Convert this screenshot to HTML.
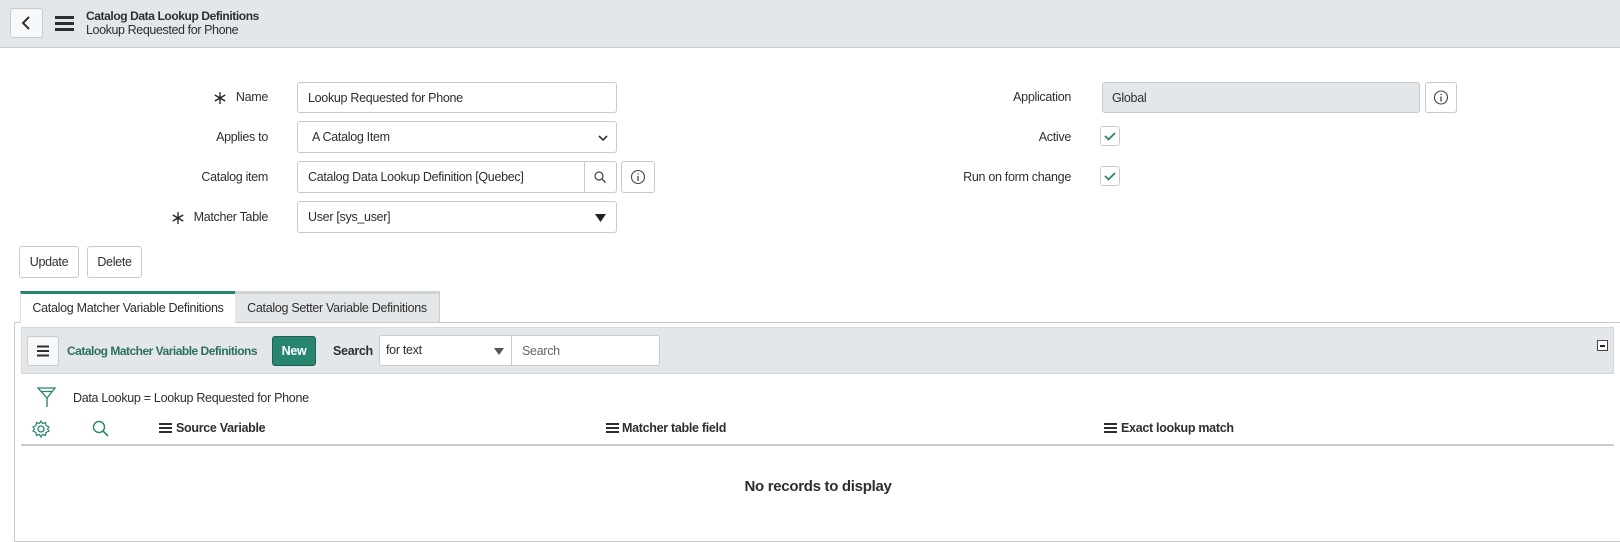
<!DOCTYPE html>
<html><head><meta charset="utf-8"><style>
*{box-sizing:border-box;margin:0;padding:0}
body{width:1620px;height:542px;background:#fff;font-family:"Liberation Sans",sans-serif;font-size:12px;color:#2e2e2e;position:relative;overflow:hidden;letter-spacing:-0.3px}
.a{position:absolute}
.top{left:0;top:0;width:1620px;height:48px;background:#e4e7ea;border-bottom:1px solid #c9cdd1}
.btn{position:absolute;border:1px solid #c8cbce;border-radius:3px;background:#fff}
.inp{position:absolute;border:1px solid #c8cbce;border-radius:3px;background:#fff;padding-left:10px;display:flex;align-items:center;font-size:12.5px;color:#2e2e2e}
.lbl{position:absolute;text-align:right;font-size:12.5px;color:#2e2e2e}
.chk{position:absolute;width:20px;height:20px;border:1px solid #c8cbce;border-radius:3px;background:#fff}
.ham i{display:block;height:2px;background:#2e2e2e;margin-bottom:4px}
</style></head><body>
<div class="a top"></div>
<div class="btn" style="left:10px;top:8px;width:33px;height:30px;background:#f7f8f9">
<svg width="33" height="30" style="position:absolute;left:-1px;top:-1px"><path d="M19 9 L13 15 L19 21" stroke="#2e2e2e" stroke-width="2" fill="none"/></svg></div>
<div class="a ham" style="left:55px;top:16px;width:19px"><i style="height:3px;margin-bottom:3px"></i><i style="height:3px;margin-bottom:3px"></i><i style="height:3px"></i></div>
<div class="a" style="left:86px;top:9px;line-height:14px;font-size:12.5px;color:#2e2e2e;letter-spacing:-0.4px"><span style="font-weight:bold;font-size:12px">Catalog Data Lookup Definitions</span><br>Lookup Requested for Phone</div>

<svg class="a" style="left:213px;top:91px" width="14" height="14"><path d="M7 1 V13 M1.8 4 L12.2 10 M1.8 10 L12.2 4" stroke="#222" stroke-width="1.3"/></svg>
<div class="lbl" style="right:1352px;top:90px">Name</div>
<div class="lbl" style="right:1352px;top:130px">Applies to</div>
<div class="lbl" style="right:1352px;top:170px">Catalog item</div>
<div class="lbl" style="right:1352px;top:210px">Matcher Table</div>
<svg class="a" style="left:171px;top:211px" width="14" height="14"><path d="M7 1 V13 M1.8 4 L12.2 10 M1.8 10 L12.2 4" stroke="#222" stroke-width="1.3"/></svg>

<div class="inp" style="left:297px;top:82px;width:320px;height:31px">Lookup Requested for Phone</div>
<div class="inp" style="left:297px;top:121px;width:320px;height:32px;padding-left:14px">A Catalog Item
<svg class="a" style="right:8px;top:12px" width="10" height="8"><path d="M1 2 L5 6 L9 2" stroke="#333" stroke-width="1.6" fill="none"/></svg></div>
<div class="inp" style="left:297px;top:161px;width:320px;height:32px">Catalog Data Lookup Definition [Quebec]
<div class="a" style="left:286px;top:0;width:1px;height:30px;background:#c8cbce"></div>
<svg class="a" style="left:295px;top:8px" width="14" height="14"><circle cx="6" cy="6" r="4" stroke="#444" stroke-width="1.2" fill="none"/><path d="M9 9 L12.5 12.5" stroke="#444" stroke-width="1.3"/></svg></div>
<div class="btn" style="left:621px;top:161px;width:34px;height:32px"><svg width="32" height="30"><circle cx="16" cy="15" r="6.5" stroke="#444" stroke-width="1.1" fill="none"/><path d="M16 14 V19 M16 11.5 V12.5" stroke="#444" stroke-width="1.3"/></svg></div>
<div class="inp" style="left:297px;top:201px;width:320px;height:32px">User [sys_user]
<svg class="a" style="right:10px;top:11px" width="11" height="10"><path d="M0 1 H11 L5.5 9 Z" fill="#222"/></svg></div>

<div class="lbl" style="right:549px;top:90px">Application</div>
<div class="lbl" style="right:549px;top:130px">Active</div>
<div class="lbl" style="right:549px;top:170px">Run on form change</div>
<div class="inp" style="left:1102px;top:82px;width:318px;height:31px;background:#e4e7ea;padding-left:9px">Global</div>
<div class="btn" style="left:1425px;top:82px;width:32px;height:31px"><svg width="30" height="29"><circle cx="15" cy="14.5" r="6.5" stroke="#444" stroke-width="1.1" fill="none"/><path d="M15 13.5 V18.5 M15 11 V12" stroke="#444" stroke-width="1.3"/></svg></div>
<div class="chk" style="left:1100px;top:126px"><svg width="18" height="18"><path d="M4 9 L7.5 12.5 L14 6" stroke="#278570" stroke-width="1.8" fill="none"/></svg></div>
<div class="chk" style="left:1100px;top:166px"><svg width="18" height="18"><path d="M4 9 L7.5 12.5 L14 6" stroke="#278570" stroke-width="1.8" fill="none"/></svg></div>

<div class="btn" style="left:19px;top:246px;width:60px;height:32px;text-align:center;line-height:30px;font-size:12.5px">Update</div>
<div class="btn" style="left:87px;top:246px;width:55px;height:32px;text-align:center;line-height:30px;font-size:12.5px">Delete</div>

<div class="a" style="left:14px;top:322px;width:1606px;height:220px;border:1px solid #c8cbce;border-right:none"></div>
<div class="a" style="left:20px;top:291px;width:215px;height:32px;background:#fff;border-top:3px solid #278570;border-left:1px solid #e0e0e0;text-align:center;line-height:29px;font-size:12.5px">Catalog Matcher Variable Definitions</div>
<div class="a" style="left:235px;top:291px;width:205px;height:31px;background:#e4e7ea;border-top:3px solid #d0d3d6;border-right:1px solid #c8cbce;text-align:center;line-height:28px;font-size:12.5px">Catalog Setter Variable Definitions</div>

<div class="a" style="left:21px;top:327px;width:1593px;height:47px;background:#e4e7ea;border:1px solid #d6d9dc"></div>
<div class="btn" style="left:27px;top:336px;width:32px;height:30px;background:#f7f8f9"><svg width="30" height="28"><path d="M9 9.5 H21 M9 14 H21 M9 18.5 H21" stroke="#2e2e2e" stroke-width="2"/></svg></div>
<div class="a" style="left:67px;top:344px;color:#2b6f62;font-size:12px;font-weight:bold;letter-spacing:-0.5px">Catalog Matcher Variable Definitions</div>
<div class="a" style="left:272px;top:336px;width:44px;height:30px;background:#278570;border:1px solid #1d5f51;border-radius:3px;color:#fff;font-weight:bold;text-align:center;line-height:28px;font-size:12.5px">New</div>
<div class="a" style="left:333px;top:344px;font-size:12.5px;font-weight:bold">Search</div>
<div class="inp" style="left:379px;top:335px;width:133px;height:31px;padding-left:6px;border-radius:3px 0 0 3px;align-items:flex-start;padding-top:7px">for text
<svg class="a" style="right:7px;top:12px" width="10" height="8"><path d="M0 0 H10 L5 7 Z" fill="#555"/></svg></div>
<div class="inp" style="left:511px;top:335px;width:149px;height:31px;border-radius:0 3px 3px 0;color:#666">Search</div>
<div class="a" style="left:1597px;top:340px;width:11px;height:11px;border:1px solid #444;background:#fff"><div style="margin:4px 2px 0;height:1.5px;background:#222"></div></div>

<svg class="a" style="left:37px;top:386px" width="20" height="22"><path d="M1 2 H18 L10 12 Z M4 5.5 H15" stroke="#278570" stroke-width="1.3" fill="none"/><path d="M10 12 V20 H9" stroke="#278570" stroke-width="1.4" fill="none"/></svg>
<div class="a" style="left:73px;top:391px;font-size:12.5px">Data Lookup = Lookup Requested for Phone</div>

<svg class="a" style="left:31px;top:419px" width="20" height="20"><circle cx="10" cy="10" r="3" stroke="#278570" stroke-width="1.3" fill="none"/><path d="M10 2 L11.5 4.5 L14.5 3.5 L15 6.5 L18 8 L16.5 10 L18 12 L15 13.5 L14.5 16.5 L11.5 15.5 L10 18 L8.5 15.5 L5.5 16.5 L5 13.5 L2 12 L3.5 10 L2 8 L5 6.5 L5.5 3.5 L8.5 4.5 Z" stroke="#278570" stroke-width="1.2" fill="none"/></svg>
<svg class="a" style="left:91px;top:419px" width="20" height="20"><circle cx="8" cy="8" r="5.5" stroke="#278570" stroke-width="1.4" fill="none"/><path d="M12 12 L17 17" stroke="#278570" stroke-width="1.6"/></svg>
<div class="a ham" style="left:159px;top:423px;width:13px"><i style="margin-bottom:2px"></i><i style="margin-bottom:2px"></i><i></i></div>
<div class="a" style="left:176px;top:421px;font-size:12.5px;font-weight:bold">Source Variable</div>
<div class="a ham" style="left:606px;top:423px;width:13px"><i style="margin-bottom:2px"></i><i style="margin-bottom:2px"></i><i></i></div>
<div class="a" style="left:622px;top:421px;font-size:12.5px;font-weight:bold">Matcher table field</div>
<div class="a ham" style="left:1104px;top:423px;width:13px"><i style="margin-bottom:2px"></i><i style="margin-bottom:2px"></i><i></i></div>
<div class="a" style="left:1121px;top:421px;font-size:12.5px;font-weight:bold">Exact lookup match</div>
<div class="a" style="left:21px;top:444px;width:1593px;height:2px;background:#ccc"></div>
<div class="a" style="left:0;width:1636px;top:478px;text-align:center;font-size:15px;font-weight:bold;color:#2e2e2e">No records to display</div>
</body></html>
